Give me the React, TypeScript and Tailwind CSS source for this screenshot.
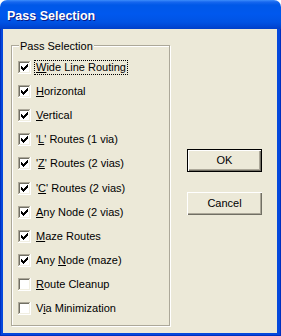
import React from "react";

const CheckBox = ({ checked }: { checked: boolean }) => (
  <svg width="13" height="13" viewBox="0 0 13 13" shapeRendering="crispEdges" className="shrink-0 block">
    <rect x="0" y="0" width="13" height="13" fill="#ffffff" />
    <rect x="0" y="0" width="12" height="1" fill="#aca899" />
    <rect x="0" y="0" width="1" height="12" fill="#aca899" />
    <rect x="1" y="1" width="10" height="1" fill="#716f64" />
    <rect x="1" y="1" width="1" height="10" fill="#716f64" />
    <rect x="1" y="11" width="11" height="1" fill="#f1efe2" />
    <rect x="11" y="1" width="1" height="11" fill="#f1efe2" />
    {checked && (
      <g fill="#000000" transform="translate(3 3)">
        <rect x="6" y="0" width="1" height="1" />
        <rect x="5" y="1" width="2" height="1" />
        <rect x="0" y="2" width="1" height="1" />
        <rect x="4" y="2" width="3" height="1" />
        <rect x="0" y="3" width="2" height="1" />
        <rect x="3" y="3" width="3" height="1" />
        <rect x="0" y="4" width="5" height="1" />
        <rect x="1" y="5" width="3" height="1" />
        <rect x="2" y="6" width="1" height="1" />
      </g>
    )}
  </svg>
);

type Item = { pre: string; key: string; post: string; checked: boolean; focus?: boolean };

const items: Item[] = [
  { pre: "", key: "W", post: "ide Line Routing", checked: true, focus: true },
  { pre: "", key: "H", post: "orizontal", checked: true },
  { pre: "", key: "V", post: "ertical", checked: true },
  { pre: "'", key: "L", post: "' Routes (1 via)", checked: true },
  { pre: "'", key: "Z", post: "' Routes (2 vias)", checked: true },
  { pre: "'", key: "C", post: "' Routes (2 vias)", checked: true },
  { pre: "", key: "A", post: "ny Node (2 vias)", checked: true },
  { pre: "", key: "M", post: "aze Routes", checked: true },
  { pre: "Any ", key: "N", post: "ode (maze)", checked: true },
  { pre: "", key: "R", post: "oute Cleanup", checked: false },
  { pre: "V", key: "i", post: "a Minimization", checked: false },
];

export default function App() {
  return (
    <div
      className="w-[281px] h-[336px] bg-white flex flex-col text-black"
      style={{ fontFamily: '"Liberation Sans", Arial, sans-serif' }}
    >
      <div className="h-[29px] shrink-0 rounded-t-[7px] bg-[linear-gradient(to_bottom,#3d8dfb_0px,#1767ef_2px,#0058e8_5px,#0058ee_14px,#0053e4_22px,#0048d6_26px,#003fc8_29px)] flex items-center pl-[7px] pt-[3px]">
        <span className="text-white font-bold text-[12.5px] leading-none [text-shadow:1px_1px_0_#0a1883]">
          Pass Selection
        </span>
      </div>
      <div className="flex-1 flex bg-[#0548dc] pl-[3px] pr-[4px] pb-[3px] shadow-[inset_1px_0_0_#0030c0,inset_-1px_0_0_#0030c0,inset_0_-1px_0_#0030c0]">
        <div className="flex-1 bg-[#ece9d8] flex">
          <div className="ml-[8px] mt-[16px] mb-[7px] w-[159px] relative border border-[#aca899] shadow-[inset_1px_1px_0_#ffffff,1px_1px_0_#ffffff]">
            <span className="absolute left-[7px] top-[-6px] px-[1px] bg-[#ece9d8] text-[11px] leading-[13px]">
              Pass Selection
            </span>
            <div className="flex flex-col pt-[9px] pl-[6px]">
              {items.map((it, i) => (
                <div key={i} className="h-[24.2px] flex items-center">
                  <CheckBox checked={it.checked} />
                  <span
                    className={
                      "ml-[3px] px-[1px] text-[11px] leading-[13px] border border-dotted " +
                      (it.focus ? "border-black" : "border-transparent")
                    }
                  >
                    {it.pre}
                    <u className="underline decoration-1 underline-offset-[1px]">{it.key}</u>
                    {it.post}
                  </span>
                </div>
              ))}
            </div>
          </div>
          <div className="ml-[17px] mt-[120px] flex flex-col gap-[20px]">
            <button className="w-[75px] h-[23px] border border-black bg-[#ece9d8] flex items-center justify-center text-[11px] shadow-[inset_1px_1px_0_#ffffff,inset_-1px_-1px_0_#716f64,inset_-2px_-2px_0_#aca899]">
              OK
            </button>
            <button className="w-[75px] h-[23px] bg-[#ece9d8] flex items-center justify-center text-[11px] shadow-[inset_1px_1px_0_#ffffff,inset_-1px_-1px_0_#716f64,inset_-2px_-2px_0_#aca899]">
              Cancel
            </button>
          </div>
        </div>
      </div>
    </div>
  );
}
